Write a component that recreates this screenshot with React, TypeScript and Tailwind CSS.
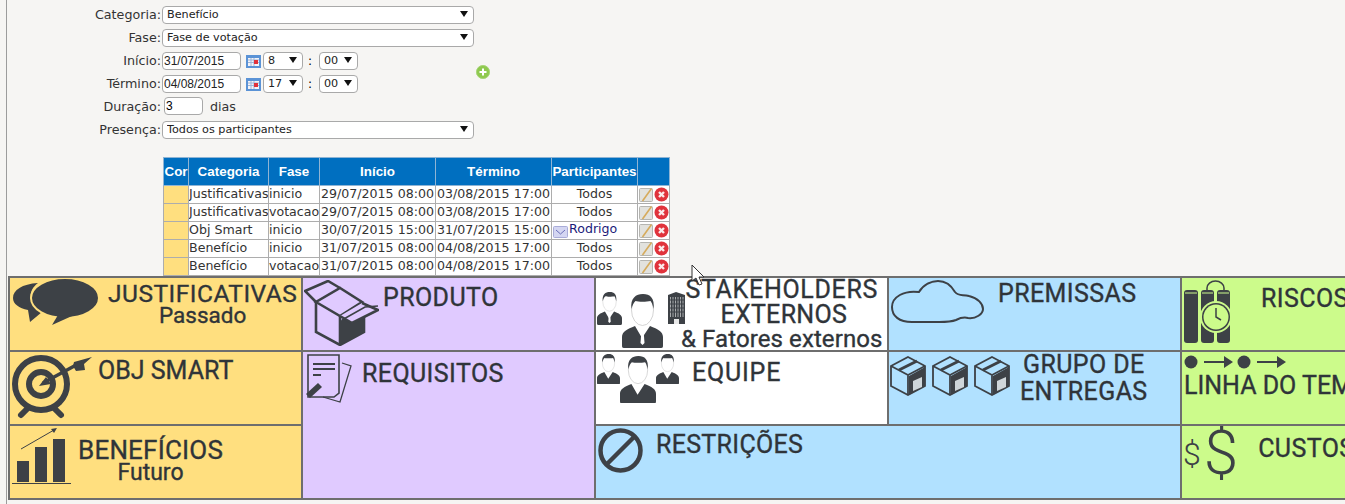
import type { ReactNode } from 'react';

const dark = '#3d4146';

const rows = [
  { cat: 'Justificativas', fase: 'inicio', ini: '29/07/2015 08:00', fim: '03/08/2015 17:00', part: 'Todos' },
  { cat: 'Justificativas', fase: 'votacao', ini: '29/07/2015 08:00', fim: '03/08/2015 17:00', part: 'Todos' },
  { cat: 'Obj Smart', fase: 'inicio', ini: '30/07/2015 15:00', fim: '31/07/2015 15:00', part: 'Rodrigo' },
  { cat: 'Benefício', fase: 'inicio', ini: '31/07/2015 08:00', fim: '04/08/2015 17:00', part: 'Todos' },
  { cat: 'Benefício', fase: 'votacao', ini: '31/07/2015 08:00', fim: '04/08/2015 17:00', part: 'Todos' },
];

function Select({ value, className }: { value: string; className: string }) {
  return (
    <div className={`relative h-[18px] ${className}`}>
      <select
        defaultValue={value}
        className="block h-full w-full appearance-none rounded-[4px] border border-[#a9a9a9] bg-white pl-[4px] text-[11.2px] leading-none text-[#222] outline-none"
      >
        <option>{value}</option>
      </select>
      <svg width="8" height="6" viewBox="0 0 8 6" className="pointer-events-none absolute right-[6px] top-[5px]">
        <path d="M0 0h8L4 6z" fill="#111" />
      </svg>
    </div>
  );
}

function Calendar() {
  return (
    <svg width="15" height="13" viewBox="0 0 15 13" className="ml-[5px] mr-[2px] mt-[1px]">
      <rect x="0" y="0" width="15" height="13" fill="#5b93d6" />
      <rect x="2" y="3" width="11" height="8" fill="#f3f3f8" />
      <path d="M2 5h11M2 7.5h11M5 3v8M8 3v8" stroke="#9db5d8" strokeWidth="1" />
      <rect x="8" y="5" width="4" height="4" fill="#e0303a" />
    </svg>
  );
}

function FormRow({ label, children }: { label: string; children: ReactNode }) {
  return (
    <div className="flex h-[23px] items-center">
      <div className="w-[154px] text-right text-[12.7px] text-[#333]">{label}:</div>
      <div className="ml-[1px] flex items-center">{children}</div>
    </div>
  );
}

function DateInput({ value }: { value: string }) {
  return (
    <input
      defaultValue={value}
      className="block h-[18px] w-[79px] rounded-[4px] border border-[#a9a9a9] bg-white pl-[1px] text-[12px] text-[#222] outline-none"
      style={{ fontFamily: '"Liberation Sans", sans-serif' }}
    />
  );
}

function TimeRow({ hour, date }: { hour: string; date: string }) {
  return (
    <>
      <DateInput value={date} />
      <Calendar />
      <Select value={hour} className="w-[40px]" />
      <span className="w-[16px] pl-[5px] text-[12px]">:</span>
      <Select value="00" className="w-[39px]" />
    </>
  );
}

function EditIcon() {
  return (
    <svg width="15" height="15" viewBox="0 0 15 15">
      <rect x="0.5" y="1.5" width="13" height="13" rx="1" fill="#e2e2de" stroke="#b5b5b1" />
      <path d="M3.5 14L12.5 1.5" stroke="#d6ab5c" strokeWidth="1.6" />
    </svg>
  );
}

function DeleteIcon() {
  return (
    <svg width="15" height="15" viewBox="0 0 15 15">
      <circle cx="7.5" cy="7.5" r="7" fill="#e0333c" />
      <path d="M5 5l5 5M10 5l-5 5" stroke="#fbeaea" strokeWidth="2.4" />
    </svg>
  );
}

function Bubbles() {
  return (
    <svg width="87" height="46" viewBox="0 0 87 46">
      <path d="M26 4C10 5 1 11 1 19c0 6 6 10 15 12l2 12 12-10-6-3C18 24 15 12 26 4z" fill={dark} />
      <ellipse cx="53" cy="19" rx="34" ry="20" fill={dark} stroke="#ffdf7f" strokeWidth="2" />
      <path d="M46 36l-6 10 20-9z" fill={dark} />
    </svg>
  );
}

function Target() {
  return (
    <svg width="82" height="66" viewBox="0 0 82 66" fill="none" stroke={dark}>
      <circle cx="29" cy="29" r="26" strokeWidth="6" />
      <circle cx="29" cy="29" r="12" strokeWidth="6" />
      <path d="M9 60l7-7M49 60l-7-7" strokeWidth="6" strokeLinecap="round" />
      <path d="M31 28L66 9" strokeWidth="3.5" />
      <path d="M27 31l12-2-5-7z" fill={dark} stroke="none" />
      <path d="M62 7l18-5-8 7 1 6-9 1-3-5z" fill={dark} stroke="none" />
    </svg>
  );
}

function Bars() {
  return (
    <svg width="60" height="58" viewBox="0 0 60 58">
      <path d="M9 22L42 3" stroke={dark} strokeWidth="1" />
      <path d="M45 1l-6 1 3 4z" fill={dark} />
      <rect x="5" y="34" width="12" height="21" fill={dark} />
      <rect x="23" y="20" width="12" height="35" fill={dark} />
      <rect x="41" y="12" width="12" height="43" fill={dark} />
      <path d="M0 56.5h59" stroke={dark} strokeWidth="1" />
    </svg>
  );
}

function OpenBox() {
  return (
    <svg width="75" height="66" viewBox="0 0 75 66" fill="none" stroke={dark} strokeWidth="2.6">
      <path d="M12 22v30l24 13 24-13V24" />
      <path d="M12 22l24 14 22-14L36 8z" />
      <path d="M36 36v29" />
      <path d="M36 65l24-13V27L36 41z" fill={dark} stroke="none" />
      <path d="M12 22L1 11 24 1l12 7" />
      <path d="M36 36l12 7 26-13-16-7" fill="#e0caff" />
      <path d="M38 40l23-13 13-1" strokeWidth="1.6" />
    </svg>
  );
}

function Notes() {
  return (
    <svg width="48" height="49" viewBox="0 0 48 49" fill="none" stroke={dark}>
      <path d="M3 1h31v38l-5 4H3z" strokeWidth="1.6" />
      <path d="M8 10h22M8 15h22M8 21h8" strokeWidth="2" />
      <path d="M37 9l9 3-11 36-17-5" strokeWidth="1.3" />
      <path d="M1 40l12-11 4 4-12 11z" fill={dark} stroke="none" />
    </svg>
  );
}

function Person({ width, tie = true }: { width: number; tie?: boolean }) {
  return (
    <svg width={width} height={(width * 54) / 41} viewBox="0 0 41 54">
      <ellipse cx="20.5" cy="16" rx="11" ry="15.5" fill="#fff" stroke="#c9c9c9" strokeWidth="0.8" />
      <path d="M9.5 15C8 4 14 0 21 0s12 4 10.5 15c-1-5-2-7-3-8-4 1-12 1-15 0-2 2-3 4-4 8z" fill={dark} />
      <path d="M2 54c-2 0-2-1-2-3v-8c0-5 5-8 13-11l7 12 8-12c8 3 13 6 13 11v8c0 2 0 3-2 3z" fill={dark} />
      {tie && <path d="M19.5 36h2l1 13-2 2-2-2z" fill="#fff" />}
    </svg>
  );
}

function Building() {
  return (
    <svg width="19" height="32" viewBox="0 0 19 32">
      <path d="M1 3l8-3 9 3v29H1z" fill={dark} />
      <path d="M3.5 5v20M6 5v20M8.5 5v20M11 5v20M13.5 5v20M16 5v20" stroke="#c4c6c8" strokeWidth="0.8" />
      <path d="M2 8h15M2 12h15M2 16h15M2 20h15" stroke={dark} strokeWidth="1" />
      <rect x="7" y="27" width="5" height="5" fill="#e8e8e8" />
    </svg>
  );
}

function Ban() {
  return (
    <svg width="45" height="45" viewBox="0 0 45 45" fill="none" stroke={dark} strokeWidth="4.5">
      <circle cx="22.5" cy="22.5" r="20" />
      <path d="M8 37L37 8" />
    </svg>
  );
}

function Cloud() {
  return (
    <svg width="93" height="44" viewBox="0 0 93 44" fill="none" stroke={dark} strokeWidth="2">
      <path d="M21 42C8 42 1 36 1 27 1 17 13 10 28 12 33 4 41 1 47 1c8 0 13 4 17 11 4 5 8 2 14 4 9 2 14 8 14 13 0 5-7 10-15 9-4-1-8 0-12 2-5 2-9 2-17 2z" />
    </svg>
  );
}

function Package() {
  return (
    <svg width="36" height="40" viewBox="0 0 36 40" fill="none" stroke={dark} strokeWidth="1.8">
      <path d="M18 1L35 10v20L18 39 1 30V10z" />
      <path d="M1 10l17 9 17-9M18 19v20" />
      <path d="M9 14L27 5" strokeWidth="3" />
      <path d="M19 39V20l16-9v19z" fill={dark} stroke="none" />
      <path d="M23 25l9-4v10l-9 4z" fill="#cfd6da" stroke="none" />
    </svg>
  );
}

function Dynamite() {
  return (
    <svg width="48" height="64" viewBox="0 0 48 64">
      <path d="M23 10V8a8.5 7 0 0 1 17 0v2" fill="none" stroke={dark} strokeWidth="1.5" />
      <rect x="0" y="10" width="14" height="53" rx="3" fill={dark} />
      <rect x="17" y="10" width="13" height="53" rx="3" fill={dark} />
      <rect x="33" y="10" width="13" height="53" rx="3" fill={dark} />
      <path d="M1 13h12M18 13h11M34 13h11" stroke="#ccfb8b" strokeWidth="1" />
      <circle cx="32" cy="37" r="16" fill="#ccfb8b" />
      <circle cx="32" cy="37" r="14" fill={dark} />
      <circle cx="32" cy="37" r="12.5" fill="#ccfb8b" />
      <path d="M32 28v9l5 3" fill="none" stroke={dark} strokeWidth="1.5" />
    </svg>
  );
}

function Timeline() {
  return (
    <svg width="104" height="14" viewBox="0 0 104 14" fill={dark}>
      <circle cx="7" cy="7" r="6.5" />
      <path d="M20 6h20V1l9 6-9 6V8H20z" />
      <circle cx="60" cy="7" r="6.5" />
      <path d="M73 6h20V1l9 6-9 6V8H73z" />
    </svg>
  );
}

function Title({ children, className = '' }: { children: ReactNode; className?: string }) {
  return (
    <div className={`whitespace-nowrap leading-none text-[#2f3439] [-webkit-text-stroke:0.35px_#2f3439] ${className}`}>
      {children}
    </div>
  );
}

function Cell({ bg, className = '', children }: { bg: string; className?: string; children: ReactNode }) {
  return (
    <div className={`flex items-start overflow-hidden border-[1px] border-[#6e6e6e] [&>*]:shrink-0 ${bg} ${className}`}>
      {children}
    </div>
  );
}

export default function App() {
  return (
    <div
      className="h-[504px] w-[1345px] overflow-hidden bg-[#f6f5f3]"
      style={{ fontFamily: '"DejaVu Sans", sans-serif' }}
    >
      <div className="relative ml-[6px] h-[504px] border-l border-[#9c9c9c]">
        <div className="pt-[3px]">
          <FormRow label="Categoria">
            <Select value="Benefício" className="w-[312px]" />
          </FormRow>
          <FormRow label="Fase">
            <Select value="Fase de votação" className="w-[312px]" />
          </FormRow>
          <FormRow label="Início">
            <TimeRow date="31/07/2015" hour="8" />
          </FormRow>
          <FormRow label="Término">
            <TimeRow date="04/08/2015" hour="17" />
          </FormRow>
          <FormRow label="Duração">
            <input
              defaultValue="3"
              className="ml-[2px] block h-[18px] w-[39px] rounded-[4px] border border-[#a9a9a9] bg-white pl-[1px] text-[12px] outline-none"
              style={{ fontFamily: '"Liberation Sans", sans-serif' }}
            />
            <span className="ml-[7px] text-[12.7px] text-[#333]">dias</span>
          </FormRow>
          <FormRow label="Presença">
            <Select value="Todos os participantes" className="w-[312px]" />
          </FormRow>
        </div>

        <svg width="14" height="14" viewBox="0 0 14 14" className="absolute left-[469px] top-[65px]">
          <circle cx="7" cy="7" r="6.6" fill="#8fc94f" stroke="#a9d67a" />
          <path d="M7 3.5v7M3.5 7h7" stroke="#fff" strokeWidth="2" />
        </svg>

        <table className="ml-[156px] mt-[16px] w-[506px] table-fixed border-collapse text-[12.6px] leading-none text-[#333]">
          <colgroup>
            <col className="w-[25px]" />
            <col className="w-[80px]" />
            <col className="w-[51px]" />
            <col className="w-[116px]" />
            <col className="w-[116px]" />
            <col className="w-[86px]" />
            <col className="w-[32px]" />
          </colgroup>
          <thead>
            <tr className="h-[28px] bg-[#006fc0] text-[13.4px] font-bold text-white" style={{ fontFamily: '"Liberation Sans", sans-serif' }}>
              {['Cor', 'Categoria', 'Fase', 'Início', 'Término', 'Participantes', ''].map((h) => (
                <th key={h} className="overflow-hidden border border-[#8fb4d4] p-0 text-center">
                  {h}
                </th>
              ))}
            </tr>
          </thead>
          <tbody>
            {rows.map((r, i) => (
              <tr key={i} className="h-[18px] bg-white">
                <td className="border border-[#adadad] bg-[#ffdf7f] p-0" />
                <td className="overflow-hidden whitespace-nowrap border border-[#adadad] p-0">{r.cat}</td>
                <td className="overflow-hidden whitespace-nowrap border border-[#adadad] p-0">{r.fase}</td>
                <td className="overflow-hidden whitespace-nowrap border border-[#adadad] p-0 text-center">{r.ini}</td>
                <td className="overflow-hidden whitespace-nowrap border border-[#adadad] p-0 text-center">{r.fim}</td>
                <td className="overflow-hidden whitespace-nowrap border border-[#adadad] p-0 text-center">
                  {r.part === 'Rodrigo' ? (
                    <div className="flex items-center">
                      <svg width="15" height="12" viewBox="0 0 15 12" className="ml-[1px] mr-[1px] mt-[2px]">
                        <rect x="0.5" y="0.5" width="14" height="11" rx="1" fill="#d4d6f2" stroke="#a9acd8" />
                        <path d="M3 4l4.5 4L12 4" fill="none" stroke="#6a6fb8" />
                      </svg>
                      <span className="-mt-[2px] text-[#1b1b7a]">Rodrigo</span>
                    </div>
                  ) : (
                    r.part
                  )}
                </td>
                <td className="border border-[#adadad] p-0">
                  <div className="flex items-center pl-[1px]">
                    <EditIcon />
                    <DeleteIcon />
                  </div>
                </td>
              </tr>
            ))}
          </tbody>
        </table>

        {/* cursor do mouse */}
        <svg width="14" height="22" viewBox="0 0 14 22" className="absolute left-[684px] top-[264px] z-10">
          <path d="M1 1v16l4-3 3 7 3-1-3-7h5z" fill="#fff" stroke="#333" strokeWidth="1" />
        </svg>

        <div
          className="ml-[1px] grid w-[1467px] grid-cols-[repeat(5,293px)] grid-rows-[repeat(3,74px)] border border-[#6e6e6e]"
          style={{ fontFamily: 'Roboto, sans-serif' }}
        >
          <Cell bg="bg-[#ffdf7f]" className="pl-[2px] pt-[1px]">
            <Bubbles />
            <div className="ml-[9px] mt-[3px]">
              <Title className="text-[24.5px] tracking-[0.5px]">JUSTIFICATIVAS</Title>
              <Title className="-mt-[3px] text-center text-[22.5px]">Passado</Title>
            </div>
          </Cell>
          <Cell bg="bg-[#e0caff]" className="pl-[1px] pt-[2px]">
            <OpenBox />
            <Title className="ml-[4px] mt-[5px] text-[25px] tracking-[0.4px]">PRODUTO</Title>
          </Cell>
          <Cell bg="bg-white" className="pl-[1px]">
            <div className="mt-[14px] flex items-start">
              <Person width={25} />
              <div className="mt-[2px]">
                <Person width={41} />
              </div>
              <div className="ml-[4px]">
                <Building />
              </div>
            </div>
            <div className="-ml-[5px] -mt-[1px] text-center">
              <Title className="text-[25px] leading-[23.5px] tracking-[0.7px]">STAKEHOLDERS</Title>
              <Title className="pl-[4px] text-[25px] leading-[23.5px] tracking-[0.3px]">EXTERNOS</Title>
              <Title className="text-[24px] leading-[24px] tracking-[0.1px]">&amp; Fatores externos</Title>
            </div>
          </Cell>
          <Cell bg="bg-[#b1e1ff]" className="pl-[2px] pt-[2px]">
            <Cloud />
            <Title className="ml-[14px] mt-[1px] text-[25px] tracking-[0.4px]">PREMISSAS</Title>
          </Cell>
          <Cell bg="bg-[#ccfb8b]" className="pl-[2px] pt-[2px]">
            <Dynamite />
            <Title className="ml-[29px] mt-[6px] text-[25px] tracking-[0.4px]">RISCOS</Title>
          </Cell>

          <Cell bg="bg-[#ffdf7f]" className="pl-[2px] pt-[3px]">
            <Target />
            <Title className="ml-[4px] mt-[3px] text-[25px]">OBJ SMART</Title>
          </Cell>
          <Cell bg="bg-[#e0caff]" className="row-span-2 pl-[2px] pt-[2px]">
            <Notes />
            <Title className="ml-[9px] mt-[7px] text-[25px] tracking-[0.4px]">REQUISITOS</Title>
          </Cell>
          <Cell bg="bg-white" className="pl-[1px] pt-[2px]">
            <Person width={23} tie={false} />
            <div className="mt-[2px]">
              <Person width={36} tie={false} />
            </div>
            <Person width={23} tie={false} />
            <Title className="ml-[13px] mt-[6px] text-[25px] tracking-[0.8px]">EQUIPE</Title>
          </Cell>
          <Cell bg="bg-[#b1e1ff]" className="pl-[1px] pt-[4px]">
            <div className="flex gap-[6px]">
              <Package />
              <Package />
              <Package />
            </div>
            <div className="ml-[10px] -mt-[4px] text-center">
              <Title className="text-[25px] tracking-[0.4px]">GRUPO DE</Title>
              <Title className="mt-[2px] text-[25px] tracking-[0.4px]">ENTREGAS</Title>
            </div>
          </Cell>
          <Cell bg="bg-[#ccfb8b]" className="flex-col pl-[2px] pt-[3px]">
            <Timeline />
            <Title className="mt-[4px] text-[25px]">LINHA DO TEMPO</Title>
          </Cell>

          <Cell bg="bg-[#ffdf7f]" className="pl-[2px] pt-[1px]">
            <Bars />
            <div className="ml-[6px] mt-[10px]">
              <Title className="text-[26px] tracking-[0.2px]">BENEFÍCIOS</Title>
              <Title className="-mt-[2px] text-center text-[23px]">Futuro</Title>
            </div>
          </Cell>
          <Cell bg="bg-[#b1e1ff]" className="col-span-2 pl-[2px] pt-[2px]">
            <Ban />
            <Title className="ml-[13px] mt-[4px] text-[25px] tracking-[0.3px]">RESTRIÇÕES</Title>
          </Cell>
          <Cell bg="bg-[#ccfb8b]" className="pl-[1px]">
            <div className="mt-[12px] text-[32px] font-light leading-none text-[#3d4146]">$</div>
            <div className="-mt-[4px] ml-[3px] text-[62px] font-light leading-none text-[#3d4146]">$</div>
            <Title className="ml-[20px] mt-[10px] text-[25px] tracking-[0.4px]">CUSTOS</Title>
          </Cell>
        </div>
      </div>
    </div>
  );
}
